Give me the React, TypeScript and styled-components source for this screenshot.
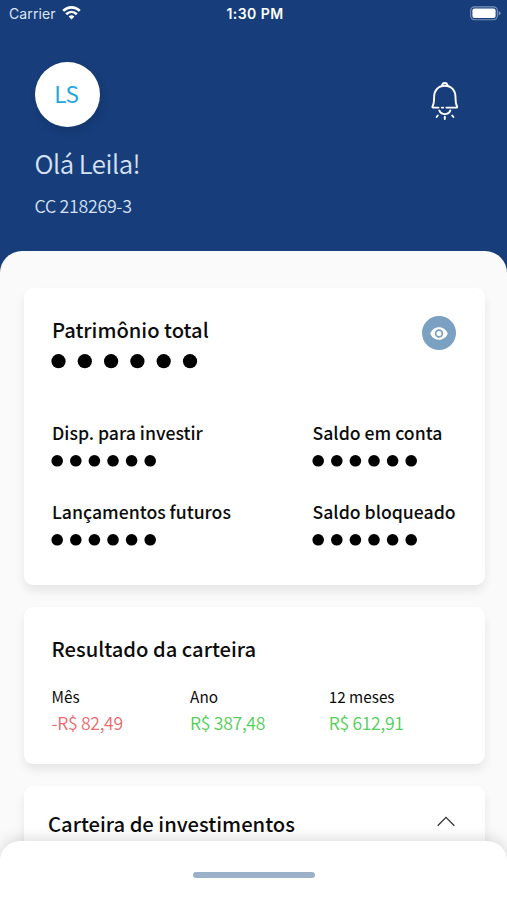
import React from "react";
import styled, { createGlobalStyle } from "styled-components";

const GlobalStyle = createGlobalStyle`
  * { box-sizing: border-box; }
  body { margin: 0; overflow: hidden; }
`;

const Screen = styled.div`
  display: flex;
  flex-direction: column;
  position: relative;
  width: 507px;
  height: 900px;
  overflow: hidden;
  background: #173d7a;
  font-family: "Noto Sans CJK SC", "Noto Sans", sans-serif;
  color: #0c0c0c;
`;

const StatusBar = styled.div`
  display: grid;
  grid-template-columns: 1fr auto 1fr;
  align-items: center;
  flex: none;
  height: 28px;
  padding: 0 6px 0 9px;
  font-family: Inter, sans-serif;
  font-size: 14px;
  color: #fff;
`;

const Carrier = styled.div`
  display: flex;
  align-items: center;
  gap: 6px;
  margin-top: -2px;
  color: #dbe5f5;
  letter-spacing: 0.1px;
`;

const Clock = styled.div`
  margin-top: -1px;
  font-weight: 600;
  letter-spacing: 0.45px;
`;

const BatteryIcon = styled.svg`
  justify-self: end;
  margin-top: -1px;
`;

const Header = styled.header`
  display: flex;
  justify-content: space-between;
  flex: none;
  height: 223px;
  padding: 34px 47px 0 34.5px;
`;

const BellIcon = styled.svg`
  margin-top: 19px;
`;

const Avatar = styled.div`
  display: flex;
  align-items: center;
  justify-content: center;
  width: 65px;
  height: 65px;
  padding: 0 1px 3px 0;
  border-radius: 50%;
  background: #fff;
  color: #1ea7de;
  font-size: 22.5px;
  line-height: 24px;
  letter-spacing: -0.4px;
  box-shadow: 2px 4px 8px rgba(0, 0, 0, 0.12);
`;

const Text = styled.div<{ $size: number; $line: number; $weight?: number; $spacing?: number; $color?: string }>`
  margin: 0;
  font-size: ${(p) => p.$size}px;
  line-height: ${(p) => p.$line}px;
  font-weight: ${(p) => p.$weight ?? 400};
  letter-spacing: ${(p) => p.$spacing ?? 0}px;
  color: ${(p) => p.$color ?? "inherit"};
  white-space: nowrap;
`;

const Greeting = styled.div`
  display: grid;
  gap: 13px;
  margin-top: 18px;
`;

const Content = styled.main`
  display: flex;
  flex-direction: column;
  flex: 1;
  padding: 37px 22.5px 0 24px;
  gap: 22px;
  background: #fafafa;
  border-radius: 22px 22px 0 0;
`;

const Card = styled.section<{ $height: number; $padding: string }>`
  flex: none;
  height: ${(p) => p.$height}px;
  padding: ${(p) => p.$padding};
  border-radius: 9px;
  background: #fff;
  box-shadow: 0 6px 10px rgba(0, 0, 0, 0.08);
`;

const CardHead = styled.div`
  display: flex;
  justify-content: space-between;
`;

const EyeButton = styled.button`
  display: flex;
  align-items: center;
  justify-content: center;
  width: 34px;
  height: 34px;
  margin-top: -2px;
  padding: 0;
  border: 0;
  border-radius: 50%;
  background: #7aa0c2;
`;

const DotRow = styled.svg<{ $top: number }>`
  display: block;
  overflow: visible;
  margin-top: ${(p) => p.$top}px;
`;

const BalanceGrid = styled.div`
  display: grid;
  grid-template-columns: 260.5px 1fr;
  row-gap: 34px;
  margin-top: 54px;
`;

const ResultGrid = styled.div`
  display: grid;
  grid-template-columns: repeat(3, 138.6px);
  margin-top: 25.5px;
`;

const ResultValue = styled(Text)`
  margin-top: 5.5px;
`;

const Chevron = styled.svg`
  margin-top: 4px;
`;

const BottomSheet = styled.div`
  position: absolute;
  left: 0;
  right: 0;
  bottom: 0;
  height: 59px;
  display: flex;
  justify-content: center;
  padding-top: 31px;
  border-radius: 20px 20px 0 0;
  background: #fff;
  box-shadow: 0 -3px 14px rgba(0, 0, 0, 0.13);
`;

const Handle = styled.div`
  width: 122px;
  height: 5.5px;
  border-radius: 3px;
  background: #9bb1c9;
`;

function HiddenValue({ large = false }: { large?: boolean }) {
  const radius = large ? 7.1 : 5.8;
  const pitch = large ? 26.3 : 18.6;
  return (
    <DotRow $top={large ? 12 : 11} width={large ? 146 : 105} height={large ? 14 : 12}>
      {Array.from({ length: 6 }, (_, i) => (
        <circle key={i} cx={radius - 0.6 + i * pitch} cy={large ? 7.2 : 5.8} r={radius} />
      ))}
    </DotRow>
  );
}

const balances = ["Disp. para investir", "Saldo em conta", "Lançamentos futuros", "Saldo bloqueado"];

const results = [
  { label: "Mês", value: "-R$ 82,49", color: "#ea6c70" },
  { label: "Ano", value: "R$ 387,48", color: "#50cf56" },
  { label: "12 meses", value: "R$ 612,91", color: "#50cf56" },
];

export default function App() {
  return (
    <Screen>
      <GlobalStyle />
      <StatusBar>
        <Carrier>
          Carrier
          <svg width="19" height="14" viewBox="0 0 19 14" fill="none" stroke="#fff" strokeWidth="2.6">
            <path d="M1.2 4.9C6 .2 13 .2 17.8 4.9" />
            <path d="M4.2 8.2C7.3 5.2 11.7 5.2 14.8 8.2" />
            <path d="M6.6 10.4Q9.5 8 12.4 10.4L9.5 13.6Z" fill="#fff" stroke="none" />
          </svg>
        </Carrier>
        <Clock>1:30 PM</Clock>
        <BatteryIcon width="31" height="15" viewBox="0 0 31 15">
          <rect x=".7" y=".9" width="26.6" height="12.8" rx="3.6" fill="none" stroke="#7d95bb" strokeWidth="1.1" />
          <rect x="2.4" y="2.6" width="23.2" height="9.4" rx="2" fill="#fff" />
          <path d="M28.6 4.9Q30.6 5.6 30.6 7.2T28.6 9.5Z" fill="#7d95bb" />
        </BatteryIcon>
      </StatusBar>

      <Header>
        <div>
          <Avatar>LS</Avatar>
          <Greeting>
            <Text as="h1" $size={25.8} $line={36} $weight={350} $spacing={-0.5} $color="#d6e2f4">Olá Leila!</Text>
            <Text $size={17.8} $line={22} $weight={350} $spacing={-0.3} $color="#d6e2f4">CC 218269-3</Text>
          </Greeting>
        </div>
        <BellIcon width="30" height="40" viewBox="0 0 30 40" fill="none" stroke="#fff" strokeWidth="1.9" strokeLinecap="round" strokeLinejoin="round">
          <path d="M8.5 26.6H3.1Q2 26.5 2.6 25.2C4.2 22.5 4 20.5 4.1 15.8C4.2 9.5 8.2 4.7 14.8 4.7S25.4 9.5 25.5 15.8C25.6 20.5 25.4 22.5 27 25.2Q27.6 26.5 26.5 26.6H16.4M11.8 26.6H13.2" />
          <path d="M12 4.7Q12.5 2 14.8 2T17.6 4.7" />
          <path d="M9.3 29.4C11.3 34.4 18.4 34.4 20.4 29.4" />
          <path d="M7.8 34.5L6.6 36M14.8 35.6V38M22.2 34.5L23.4 36" />
        </BellIcon>
      </Header>

      <Content>
        <Card $height={296.5} $padding="30px 28.5px 0 28px">
          <CardHead>
            <div>
              <Text $size={20.15} $line={24} $weight={500}>Patrimônio total</Text>
              <HiddenValue large />
            </div>
            <EyeButton aria-label="Mostrar valores">
              <svg width="18" height="13" viewBox="0 0 18 13">
                <path fillRule="evenodd" fill="#fff" d="M9 .2C5 .2 1.6 2.7.2 6.5C1.6 10.3 5 12.8 9 12.8S16.4 10.3 17.8 6.5C16.4 2.7 13 .2 9 .2ZM9 10.7A4.2 4.2 0 1 1 9 2.3A4.2 4.2 0 0 1 9 10.7ZM9 4A2.5 2.5 0 1 0 9 9A2.5 2.5 0 0 0 9 4Z" />
              </svg>
            </EyeButton>
          </CardHead>
          <BalanceGrid>
            {balances.map((label) => (
              <div key={label}>
                <Text $size={17.65} $line={22} $weight={500}>{label}</Text>
                <HiddenValue />
              </div>
            ))}
          </BalanceGrid>
        </Card>

        <Card $height={157} $padding="30px 28px 0 27.5px">
          <Text $size={20.2} $line={24} $weight={500}>Resultado da carteira</Text>
          <ResultGrid>
            {results.map((r) => (
              <div key={r.label}>
                <Text $size={15.3} $line={20}>{r.label}</Text>
                <ResultValue $size={17.6} $line={22} $weight={350} $spacing={-0.3} $color={r.color}>{r.value}</ResultValue>
              </div>
            ))}
          </ResultGrid>
        </Card>

        <Card $height={120} $padding="26px 29px 0 24px">
          <CardHead>
            <Text $size={20.2} $line={24} $weight={500}>Carteira de investimentos</Text>
            <Chevron width="20" height="11" viewBox="0 0 20 11" fill="none" stroke="#333" strokeWidth="1.3">
              <path d="M1.7 9.7L10 1.4L18.3 9.7" />
            </Chevron>
          </CardHead>
        </Card>
      </Content>

      <BottomSheet>
        <Handle />
      </BottomSheet>
    </Screen>
  );
}
